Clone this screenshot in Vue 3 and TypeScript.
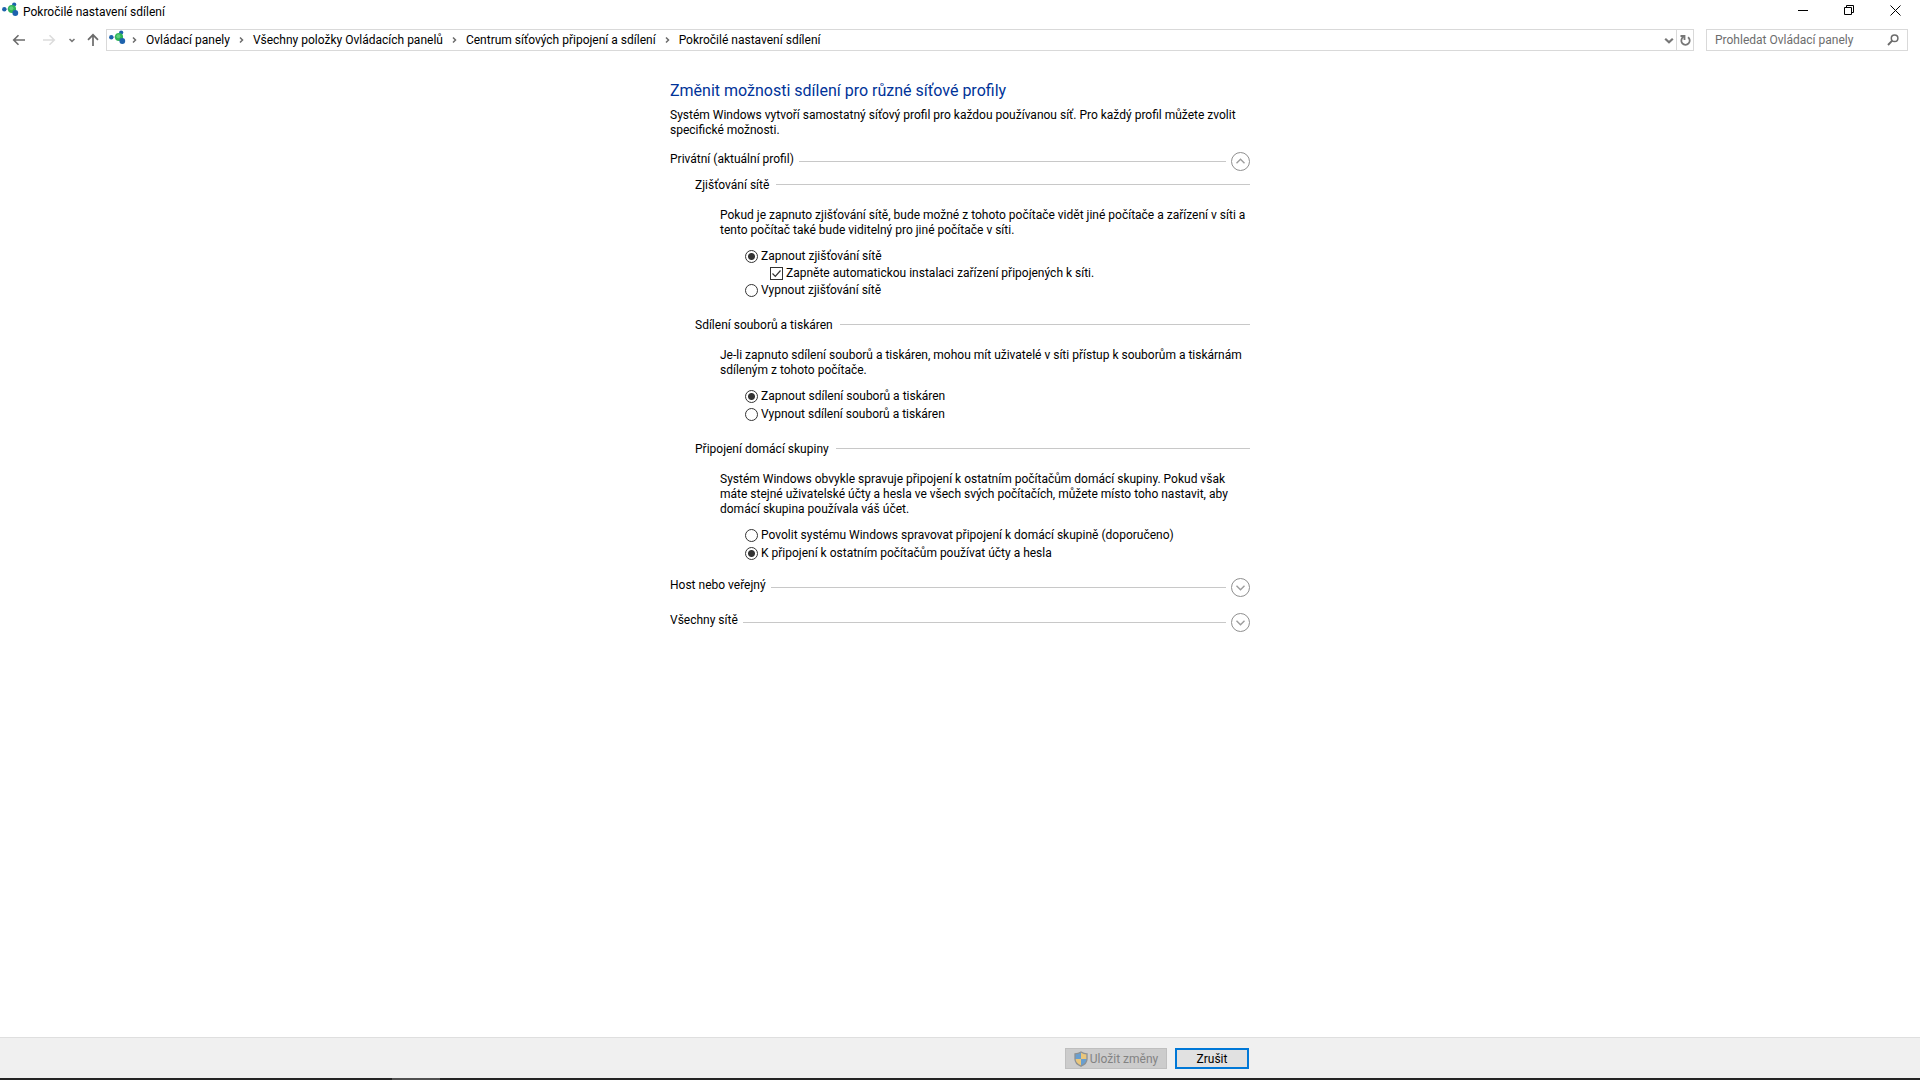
<script setup lang="ts">
import { reactive, ref } from 'vue'

interface Choice {
  value: string
  label: string
  extra?: string
}

interface Section {
  id: string
  title: string
  text: string
  compact?: boolean
  choices: Choice[]
}

const crumbs: string[] = [
  'Ovládací panely',
  'Všechny položky Ovládacích panelů',
  'Centrum síťových připojení a sdílení',
  'Pokročilé nastavení sdílení',
]

const sections: Section[] = [
  {
    id: 'discovery',
    title: 'Zjišťování sítě',
    text: 'Pokud je zapnuto zjišťování sítě, bude možné z tohoto počítače vidět jiné počítače a zařízení v síti a\ntento počítač také bude viditelný pro jiné počítače v síti.',
    compact: true,
    choices: [
      { value: 'on', label: 'Zapnout zjišťování sítě', extra: 'Zapněte automatickou instalaci zařízení připojených k síti.' },
      { value: 'off', label: 'Vypnout zjišťování sítě' },
    ],
  },
  {
    id: 'files',
    title: 'Sdílení souborů a tiskáren',
    text: 'Je-li zapnuto sdílení souborů a tiskáren, mohou mít uživatelé v síti přístup k souborům a tiskárnám\nsdíleným z tohoto počítače.',
    choices: [
      { value: 'on', label: 'Zapnout sdílení souborů a tiskáren' },
      { value: 'off', label: 'Vypnout sdílení souborů a tiskáren' },
    ],
  },
  {
    id: 'homegroup',
    title: 'Připojení domácí skupiny',
    text: 'Systém Windows obvykle spravuje připojení k ostatním počítačům domácí skupiny. Pokud však\nmáte stejné uživatelské účty a hesla ve všech svých počítačích, můžete místo toho nastavit, aby\ndomácí skupina používala váš účet.',
    choices: [
      { value: 'windows', label: 'Povolit systému Windows spravovat připojení k domácí skupině (doporučeno)' },
      { value: 'accounts', label: 'K připojení k ostatním počítačům používat účty a hesla' },
    ],
  },
]

const selected = reactive<Record<string, string>>({
  discovery: 'on',
  files: 'on',
  homegroup: 'accounts',
})
const autoInstall = ref(true)
const search = ref('')

const profiles = reactive([
  { id: 'private', title: 'Privátní (aktuální profil)', open: true, sections },
  { id: 'guest', title: 'Host nebo veřejný', open: false, sections: [] as Section[] },
  { id: 'all', title: 'Všechny sítě', open: false, sections: [] as Section[] },
])
</script>

<template>
  <div class="window">
    <header class="titlebar">
      <svg class="net-icon" viewBox="0 0 18 16" aria-hidden="true">
        <path d="M3 9h7" stroke="#b5c3cc" fill="none" />
        <circle cx="2.3" cy="9.3" r="2.2" fill="#1d62ad" />
        <circle cx="12.2" cy="4.6" r="2.1" fill="#1d62ad" />
        <circle cx="10" cy="9" r="4.1" fill="#2fb457" />
        <circle cx="9.4" cy="8.2" r="2" fill="#5fd07c" />
        <circle cx="13.3" cy="13" r="2.9" fill="#1d62ad" />
      </svg>
      <h1 class="window-title">Pokročilé nastavení sdílení</h1>
      <div class="window-controls">
        <button type="button" aria-label="Minimalizovat">
          <svg viewBox="0 0 11 11"><path d="M0 5.5h10" stroke="#000" /></svg>
        </button>
        <button type="button" aria-label="Obnovit">
          <svg viewBox="0 0 11 11"><path d="M.5 2.5h7v7h-7zM2.5 2.5v-2h7v7h-2" fill="none" stroke="#000" /></svg>
        </button>
        <button type="button" aria-label="Zavřít">
          <svg viewBox="0 0 11 11"><path d="M.5.5l10 10M10.5.5l-10 10" fill="none" stroke="#000" /></svg>
        </button>
      </div>
    </header>

    <nav class="navbar">
      <div class="nav-buttons">
        <button type="button" class="nav-arrow" aria-label="Zpět">
          <svg viewBox="0 0 14 12"><path d="M13 6H2M6.5 1.2L1.7 6l4.8 4.8" fill="none" stroke="#6b6b6b" stroke-width="1.6" /></svg>
        </button>
        <button type="button" class="nav-arrow" aria-label="Vpřed" disabled>
          <svg viewBox="0 0 14 12"><path d="M1 6h11M7.5 1.2L12.3 6l-4.8 4.8" fill="none" stroke="#dcdcdc" stroke-width="1.6" /></svg>
        </button>
        <button type="button" class="nav-recent" aria-label="Poslední umístění">
          <svg viewBox="0 0 14 12"><path d="M4.5 5L7 7.3 9.5 5" fill="none" stroke="#7a7a7a" stroke-width="1.6" /></svg>
        </button>
        <button type="button" class="nav-up" aria-label="Nahoru">
          <svg viewBox="0 0 14 14"><path d="M7 13V2M2 6.8L7 1.8l5 5" fill="none" stroke="#6b6b6b" stroke-width="1.7" /></svg>
        </button>
      </div>

      <div class="address">
        <svg class="net-icon" viewBox="0 0 18 16" aria-hidden="true">
          <path d="M3 9h7" stroke="#b5c3cc" fill="none" />
          <circle cx="2.3" cy="9.3" r="2.2" fill="#1d62ad" />
          <circle cx="12.2" cy="4.6" r="2.1" fill="#1d62ad" />
          <circle cx="10" cy="9" r="4.1" fill="#2fb457" />
          <circle cx="9.4" cy="8.2" r="2" fill="#5fd07c" />
          <circle cx="13.3" cy="13" r="2.9" fill="#1d62ad" />
        </svg>
        <ol class="crumbs">
          <li v-for="crumb in crumbs" :key="crumb">
            <svg class="crumb-sep" viewBox="0 0 5 8" aria-hidden="true"><path d="M1 1.5L3.5 4 1 6.5" fill="none" stroke="#6b6b6b" stroke-width="1.5" /></svg>
            <a href="#">{{ crumb }}</a>
          </li>
        </ol>
        <button type="button" class="address-drop" aria-label="Předchozí umístění">
          <svg viewBox="0 0 10 8"><path d="M1.2 2.7L5 6.2l3.8-3.5" fill="none" stroke="#777" stroke-width="2.2" /></svg>
        </button>
        <button type="button" class="address-refresh" aria-label="Aktualizovat">
          <svg viewBox="0 0 12 12"><path d="M9 3.2A4.2 4.2 0 1 1 4.200 3.100M1.500 2h4v4" fill="none" stroke="#777" stroke-width="1.8" /></svg>
        </button>
      </div>

      <form class="search" role="search" @submit.prevent>
        <input v-model="search" type="text" placeholder="Prohledat Ovládací panely" aria-label="Prohledat Ovládací panely" />
        <button type="submit" aria-label="Hledat">
          <svg viewBox="0 0 12 12"><circle cx="7.6" cy="4.3" r="3.3" fill="none" stroke="#6b6b6b" stroke-width="1.5" /><path d="M5.2 6.7L1 11" stroke="#6b6b6b" stroke-width="1.9" /></svg>
        </button>
      </form>
    </nav>

    <main class="content">
      <div class="column">
        <h2 class="heading">Změnit možnosti sdílení pro různé síťové profily</h2>
        <p class="intro">Systém Windows vytvoří samostatný síťový profil pro každou používanou síť. Pro každý profil můžete zvolit<br />specifické možnosti.</p>

        <section v-for="profile in profiles" :key="profile.id" class="profile">
          <div class="profile-head">
            <h3>{{ profile.title }}</h3>
            <span class="rule"></span>
            <button type="button" class="expander" :aria-label="profile.title" :aria-expanded="profile.open" @click="profile.open = !profile.open">
              <svg viewBox="0 0 19 19">
                <circle cx="9.5" cy="9.5" r="9" fill="#fff" stroke="#8f8f8f" />
                <path :d="profile.open ? 'M5.5 11.2l4-4 4 4' : 'M5.5 7.8l4 4 4-4'" fill="none" stroke="#9c9c9c" stroke-width="1.4" />
              </svg>
            </button>
          </div>

          <template v-if="profile.open">
            <fieldset v-for="section in profile.sections" :key="section.id" class="group">
              <legend class="group-head">
                <span class="group-title">{{ section.title }}</span>
                <span class="rule"></span>
              </legend>
              <p class="group-text">{{ section.text }}</p>
              <div class="choices" :class="{ compact: section.compact }">
                <template v-for="choice in section.choices" :key="choice.value">
                  <label class="choice">
                    <input v-model="selected[section.id]" type="radio" :name="section.id" :value="choice.value" />
                    <span>{{ choice.label }}</span>
                  </label>
                  <label v-if="choice.extra" class="choice nested">
                    <span class="check">
                      <input v-model="autoInstall" type="checkbox" />
                      <svg v-if="autoInstall" viewBox="0 0 13 13" aria-hidden="true"><path d="M2.5 6.5l2.8 2.8 5.2-5.8" fill="none" stroke="#333" stroke-width="1.2" /></svg>
                    </span>
                    <span>{{ choice.extra }}</span>
                  </label>
                </template>
              </div>
            </fieldset>
          </template>
        </section>
      </div>
    </main>

    <footer class="actions">
      <div class="column action-row">
        <button type="button" class="btn save" disabled>
          <svg viewBox="0 0 14 16" aria-hidden="true">
            <path d="M7 1c2 1.3 4 1.8 6 1.8V8c0 3.5-2.5 5.8-6 7.2C3.5 13.8 1 11.5 1 8V2.8C3 2.8 5 2.3 7 1z" fill="#e9c67c" />
            <path d="M7 1v7H1V2.8C3 2.8 5 2.3 7 1zM7 8h6c0 3.5-2.5 5.8-6 7.2z" fill="#6a9fcf" />
            <path d="M7 1c2 1.3 4 1.8 6 1.8V8c0 3.5-2.5 5.8-6 7.2C3.5 13.8 1 11.5 1 8V2.8C3 2.8 5 2.3 7 1z" fill="none" stroke="#8d9194" stroke-width="1.3" />
          </svg>
          <span>Uložit změny</span>
        </button>
        <button type="button" class="btn cancel"><span>Zrušit</span></button>
      </div>
    </footer>
    <div class="taskbar-edge"><span></span></div>
  </div>
</template>

<style>
body {
  margin: 0;
  background: #fff;
}
</style>

<style scoped>
.window {
  display: flex;
  flex-direction: column;
  min-height: 100vh;
  background: #fff;
  color: #000;
  font-family: "Segoe UI", Roboto, "Noto Sans", sans-serif;
  font-size: 12px;
  line-height: 15px;
}

.window * {
  box-sizing: border-box;
}

button {
  display: flex;
  align-items: center;
  justify-content: center;
  padding: 0;
  border: 0;
  background: none;
  color: inherit;
  font: inherit;
}

svg {
  display: block;
  flex: none;
}

.titlebar {
  display: flex;
  align-items: center;
  height: 24px;
  padding: 0 2px;
}

.net-icon {
  width: 18px;
  height: 16px;
  margin-bottom: 8px;
}

.window-title {
  flex: 1;
  margin: 0;
  padding-left: 3px;
  font-size: 12px;
  font-weight: 400;
}

.window-controls {
  display: flex;
  align-self: flex-start;
}

.window-controls button {
  width: 46px;
  height: 21px;
}

.window-controls svg {
  width: 11px;
  height: 11px;
}

.navbar {
  display: flex;
  align-items: center;
  height: 32px;
  padding: 0 12px 0 4px;
}

.nav-buttons {
  display: flex;
  width: 102px;
}

.nav-arrow {
  width: 30px;
  height: 22px;
}

.nav-recent {
  width: 16px;
}

.nav-up {
  width: 26px;
}

.nav-arrow svg,
.nav-recent svg {
  width: 14px;
  height: 12px;
}

.nav-up svg {
  width: 14px;
  height: 14px;
}

.address {
  display: flex;
  flex: 1;
  align-items: center;
  height: 22px;
  padding-left: 2px;
  border: 1px solid #d9d9d9;
}

.crumbs {
  display: flex;
  flex: 1;
  margin: 0;
  padding: 0 0 0 5px;
  list-style: none;
}

.crumbs li {
  display: flex;
  align-items: center;
  margin-right: 9px;
}

.crumbs a {
  color: #000;
  text-decoration: none;
}

.crumb-sep {
  width: 5px;
  height: 8px;
  margin-right: 9px;
}

.address-drop {
  width: 14px;
  height: 20px;
}

.address-drop svg {
  width: 10px;
  height: 8px;
}

.address-refresh {
  width: 17px;
  height: 20px;
  border-left: 1px solid #d9d9d9;
}

.address-refresh svg {
  width: 12px;
  height: 12px;
}

.search {
  display: flex;
  width: 202px;
  height: 22px;
  margin-left: 12px;
  border: 1px solid #d9d9d9;
}

.search input {
  flex: 1;
  min-width: 0;
  padding: 0 0 0 8px;
  border: 0;
  outline: 0;
  background: none;
  color: #000;
  font: inherit;
}

.search input::placeholder {
  color: #6d6d6d;
  opacity: 1;
}

.search button {
  width: 28px;
}

.search button svg {
  width: 12px;
  height: 12px;
}

.content {
  flex: 1;
  padding-top: 24px;
}

.column {
  width: 100%;
  max-width: 580px;
  margin: 0 auto;
}

.heading {
  margin: 0 0 6px;
  color: #003399;
  font-size: 16px;
  font-weight: 400;
  line-height: 22px;
}

.intro {
  margin: 0 0 14px;
  white-space: nowrap;
}

.profile {
  margin-bottom: 16px;
}

.profile-head {
  display: flex;
  align-items: center;
  gap: 5px;
  height: 19px;
}

.profile-head h3 {
  margin: 0;
  padding-bottom: 4px;
  font-size: 12px;
  font-weight: 400;
}

.rule {
  flex: 1;
  height: 1px;
  background: #c8c8c8;
}

.expander,
.expander svg {
  width: 19px;
  height: 19px;
}

.group {
  min-width: 0;
  margin: 0 0 17px;
  padding: 0 0 0 25px;
  border: 0;
}

.profile-head + .group {
  margin-top: 5px;
}

.group:last-child {
  margin-bottom: 0;
}

.group-head {
  display: flex;
  align-items: center;
  gap: 7px;
  width: 100%;
  height: 17px;
  padding: 0;
}

.group-title {
  padding-top: 2px;
}

.group-text {
  margin: 15px 0 10px 25px;
  white-space: pre;
}

.choices {
  display: flex;
  flex-direction: column;
  gap: 1px;
  padding-left: 50px;
}

.choices.compact {
  gap: 0;
}

.choice {
  display: flex;
  align-items: center;
  gap: 3px;
  height: 17px;
}

.nested {
  padding-left: 25px;
}

.choice input {
  display: block;
  width: 13px;
  height: 13px;
  margin: 0;
  appearance: none;
  border: 1px solid #333;
  background: #fff;
}

.choice input[type='radio'] {
  border-radius: 50%;
}

.choice input[type='radio']:checked {
  background: radial-gradient(circle, #333 3px, #fff 4px);
}

.check {
  display: grid;
}

.check > * {
  grid-area: 1 / 1;
  width: 13px;
  height: 13px;
}

.check svg {
  pointer-events: none;
}

.actions {
  padding: 10px 0 9px;
  border-top: 1px solid #dfdfdf;
  background: #f0f0f0;
}

.action-row {
  display: flex;
  justify-content: flex-end;
  gap: 8px;
  padding-right: 1px;
}

.btn {
  height: 21px;
  background: #e1e1e1;
}

.btn span {
  padding-top: 2px;
}

.save {
  gap: 2px;
  width: 102px;
  border: 1px solid #bfbfbf;
  background: #ccc;
  color: #838383;
}

.save svg {
  width: 14px;
  height: 16px;
}

.cancel {
  width: 74px;
  border: 2px solid #0078d7;
}

.taskbar-edge {
  display: flex;
  height: 2px;
  padding-left: 392px;
  background: #242424;
}

.taskbar-edge span {
  width: 48px;
  background: #505050;
}
</style>
